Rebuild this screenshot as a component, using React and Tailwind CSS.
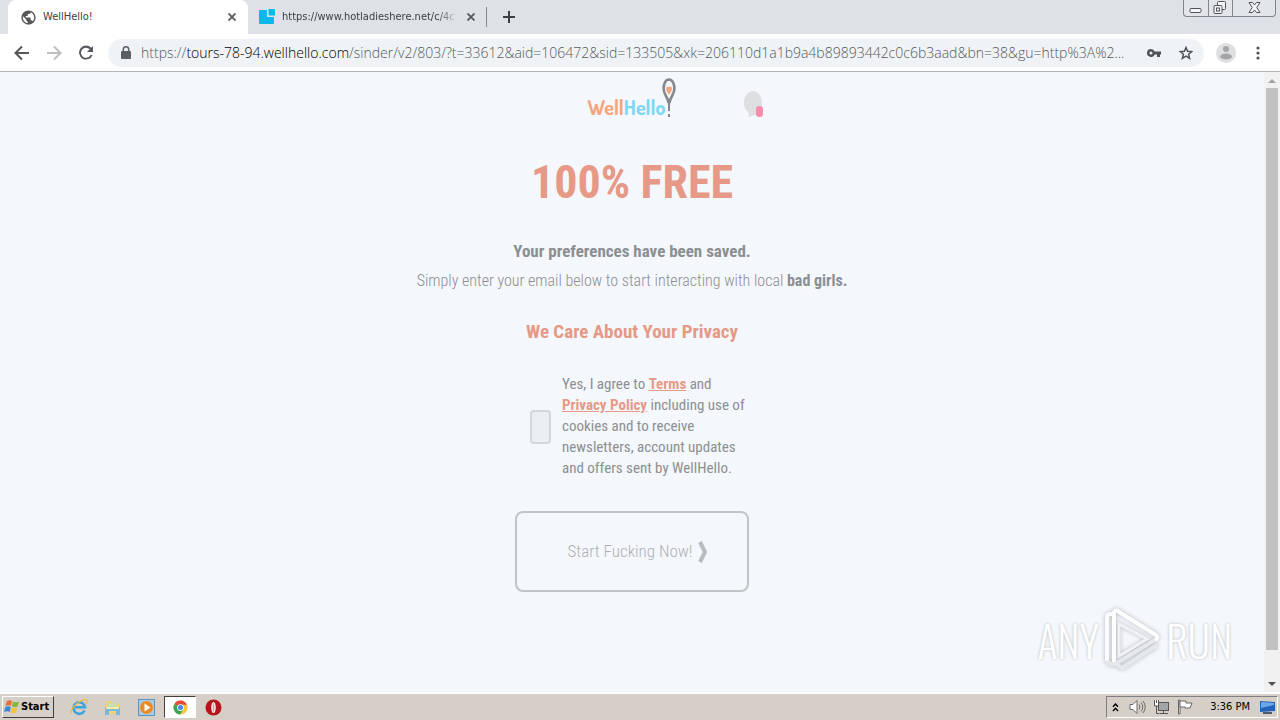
import React, { useState } from 'react';
import { MdPublic } from 'react-icons/md';

const Cross = () => (
    <svg width="8" height="8" viewBox="0 0 8 8" stroke="#55595e" strokeWidth="1.8" aria-hidden="true">
        <path d="M.5 .5l7 7M7.5 .5l-7 7" />
    </svg>
);

const TabStrip = () => (
    <div className="flex h-[34px] items-stretch bg-[#dee1e6] pl-2">
        <div className="flex w-60 items-center rounded-t-lg bg-white pr-3 pl-3">
            <MdPublic size={17} color="#54575c" aria-hidden="true" />
            <span className="ml-[6px] flex-1 text-[#3c4043]">WellHello!</span>
            <button aria-label="Close WellHello! tab"><Cross /></button>
        </div>
        <div className="flex w-[228px] items-center pl-[11px]">
            <svg width="16" height="16" viewBox="0 0 16 16" fill="#0cb7ef" aria-hidden="true">
                <path d="M1 1h7v7h7v6q0 1-1 1H1q-1 0-1-1V2q0-1 1-1z" />
                <path d="M9.5 0H15q1 0 1 1v5.5H11q-1.5 0-1.5-1.5z" />
            </svg>
            <span className="ml-[7px] w-[176px] overflow-hidden whitespace-nowrap text-[#3c4043] [mask-image:linear-gradient(to_right,black_88%,transparent)]">
                https://www.hotladieshere.net/c/4c
            </span>
            <button className="ml-[9px]" aria-label="Close hotladieshere.net tab"><Cross /></button>
        </div>
        <div className="ml-[10px] h-5 w-px self-center bg-[#85888c]" />
        <button className="ml-4 self-center" aria-label="New tab">
            <svg width="12" height="12" viewBox="0 0 12 12" stroke="#3c4043" strokeWidth="2">
                <path d="M6 0v12M0 6h12" />
            </svg>
        </button>
        <div className="mr-1 ml-auto flex h-[17px] w-[93px] rounded-b border border-t-0 border-[#82868c] bg-[#e2e5ea]">
            <button className="flex flex-1 items-center justify-center border-r border-[#82868c]" aria-label="Minimize">
                <svg width="13" height="17" viewBox="0 0 13 17" fill="#f4f5f7" stroke="#50545a">
                    <rect x="1" y="8.5" width="11" height="4" rx="1" />
                </svg>
            </button>
            <button className="flex flex-1 items-center justify-center border-r border-[#82868c]" aria-label="Restore">
                <svg width="14" height="14" viewBox="0 0 14 14" fill="#f4f5f7" stroke="#50545a">
                    <rect x="4.5" y=".5" width="8" height="8" rx="1" />
                    <rect x="1" y="4.5" width="8" height="8" rx="1" />
                    <rect x="3.5" y="7" width="3" height="3" />
                </svg>
            </button>
            <button className="flex w-[42px] items-center justify-center" aria-label="Close window">
                <svg width="13" height="12" viewBox="0 0 13 12" fill="#f4f5f7" stroke="#50545a">
                    <path d="M1 .5h3.5l2 2.5 2-2.5H12L8.8 5.5l3.2 5H8.5l-2-2.5-2 2.5H1l3.2-5z" />
                </svg>
            </button>
        </div>
    </div>
);

const Toolbar = () => (
    <div className="flex h-[38px] items-center border-b border-[#b1b4b8] bg-white pr-5 pl-[14px]">
        <button aria-label="Back">
            <svg width="16" height="16" viewBox="0 0 16 16" fill="none" stroke="#55585d" strokeWidth="2">
                <path d="M15 8H2M8 1.500L1.500 8 8 14.500" />
            </svg>
        </button>
        <button className="ml-4" aria-label="Forward">
            <svg width="16" height="16" viewBox="0 0 16 16" fill="none" stroke="#bcbec1" strokeWidth="2">
                <path d="M1 8h13M8 1.500l6.500 6.500L8 14.500" />
            </svg>
        </button>
        <button className="ml-4" aria-label="Reload">
            <svg width="16" height="16" viewBox="0 0 16 16" fill="#55585d">
                <path d="M13.200 2.800A7 7 0 1 0 14.600 10h-2.100A5 5 0 1 1 11.700 4.300L9 7h6V1z" />
            </svg>
        </button>
        <div className="ml-[14px] flex h-7 min-w-0 flex-1 items-center rounded-full bg-[#f0f3f5] pr-[11px] pl-[13px]">
            <svg width="10" height="13" viewBox="0 0 10 13" className="shrink-0" aria-hidden="true">
                <rect x="0" y="5" width="10" height="8" rx="1" fill="#5b5f64" />
                <path d="M2.300 5V3.500a2.700 2.700 0 0 1 5.400 0V5" fill="none" stroke="#5b5f64" strokeWidth="1.500" />
            </svg>
            <div className="ml-[10px] min-w-0 flex-1 font-['Open_Sans',sans-serif] text-[14px] font-light whitespace-nowrap text-[#55595e]">
                https://<span className="text-black">tours-78-94.wellhello.com</span>/sinder/v2/803/?t=33612&amp;aid=106472&amp;sid=133505&amp;xk=206110d1a1b9a4b89893442c0c6b3aad&amp;bn=38&amp;gu=http%3A%2...
            </div>
            <button aria-label="Saved passwords">
                <svg width="14" height="8" viewBox="0 0 14 8" fill="#505459">
                    <path fillRule="evenodd" d="M4 0a4 4 0 1 0 3.700 5.500H10V8h3V5.500h1v-3H7.700A4 4 0 0 0 4 0zm0 2.500a1.500 1.500 0 1 1 0 3 1.500 1.500 0 0 1 0-3z" />
                </svg>
            </button>
            <button className="ml-[18px]" aria-label="Bookmark this page">
                <svg width="14" height="14" viewBox="0 0 14 14" fill="none" stroke="#505459" strokeWidth="1.500">
                    <path d="M7 1.500l1.600 3.800 4.200.3-3.200 2.700 1 4.100L7 10.200l-3.600 2.200 1-4.100-3.200-2.700 4.200-.3z" />
                </svg>
            </button>
        </div>
        <button className="ml-3" aria-label="Profile">
            <svg width="20" height="20" viewBox="0 0 20 20">
                <circle cx="10" cy="10" r="10" fill="#dedfe1" />
                <circle cx="10" cy="6" r="3" fill="#a3a5a8" />
                <ellipse cx="10" cy="13.500" rx="6" ry="3" fill="#a3a5a8" />
            </svg>
        </button>
        <button className="ml-5" aria-label="Menu">
            <svg width="4" height="14" viewBox="0 0 4 14" fill="#505459">
                <circle cx="2" cy="2" r="1.600" />
                <circle cx="2" cy="7" r="1.600" />
                <circle cx="2" cy="12" r="1.600" />
            </svg>
        </button>
    </div>
);

const Logo = () => (
    <a href="#home" className="flex h-10 items-end font-['Dosis','Roboto_Condensed',sans-serif] text-[20px] leading-[22px] font-bold">
        <span className="text-[#f6a57c]">Well</span>
        <span className="text-[#7dd7f3]">Hello</span>
        <svg width="14" height="40" viewBox="0 0 14 40" className="-ml-[3px]" aria-hidden="true">
            <path d="M7 1.500c-3.200 0-5.400 4-5.400 9 0 6 3.700 7.500 4.700 13.500h1.400c1-6 4.700-7.500 4.700-13.500 0-5-2.200-9-5.400-9z" fill="#f4f7fb" stroke="#85898f" strokeWidth="2.600" />
            <path d="M7 17C5.500 14.500 4 13 4 10.600c0-2.400 2.100-2.900 3-1.100 .9-1.800 3-1.300 3 1.100C10 13 8.500 14.500 7 17z" fill="#f5a77c" />
            <path d="M6 21h2v12H6zM6 36h2v3H6z" fill="#85898f" />
        </svg>
    </a>
);

const Watermark = () => (
    <div className="absolute right-8 bottom-5 flex items-center gap-[6px] font-['Oswald','Roboto_Condensed',sans-serif] text-[42px] leading-none font-light text-white [text-shadow:0_0_3px_#b4b8bc]">
        <span>ANY</span>
        <svg width="55" height="64" viewBox="0 0 55 64" fill="none" className="drop-shadow-[0_0_2px_#b4b8bc]" aria-hidden="true">
            <path d="M2 53V9q0-3 5-3" stroke="#fafcfd" strokeWidth="4" />
            <path d="M9 55V4q2-3 5 0l37 23q3 3-1 5" stroke="#fdfefe" strokeWidth="4" strokeLinejoin="round" />
            <path d="M50 32L10 56q-5 1-8-3M52 37L17 60l-6-4" stroke="#e6e9eb" strokeWidth="4" strokeLinejoin="round" />
            <path d="M14 16l28 15-28 17z" stroke="#f0f2f4" strokeWidth="3" />
        </svg>
        <span>RUN</span>
    </div>
);

const Page = () => {
    const [agreed, setAgreed] = useState(false);

    return (
        <main className="relative min-w-0 flex-1 bg-[#f4f7fb] font-['Roboto_Condensed','Liberation_Sans',sans-serif] text-[#8c8f92]">
            <div className="grid grid-cols-[1fr_auto_1fr] items-center pt-[6px]">
                <span />
                <Logo />
                <svg width="19" height="27" viewBox="0 0 19 27" className="mt-3 ml-[68px]" aria-hidden="true">
                    <path d="M9 0c5 0 9 5 9 12s-4 12-8 12c-2 0-3 2-6 2 1-2 1-3 0-5-3-2-4-5-4-9C0 5 4 0 9 0z" fill="#dddfe1" />
                    <rect x="12" y="15" width="7" height="11" rx="3" fill="#fb8cab" />
                </svg>
            </div>
            <h1 className="mt-[34px] text-center text-[46px] leading-[60px] font-bold text-[#e69987]">100% FREE</h1>
            <p className="mt-6 text-center text-[17px] leading-[30px] font-bold">Your preferences have been saved.</p>
            <p className="text-center text-base leading-[30px] font-light">
                Simply enter your email below to start interacting with local <strong className="font-bold">bad girls.</strong>
            </p>
            <h2 className="mt-5 text-center text-[19px] leading-8 font-bold text-[#e69987]">We Care About Your Privacy</h2>
            <div className="mx-auto mt-[26px] flex w-[234px] items-center pl-[15px]">
                <input
                    id="agree"
                    type="checkbox"
                    checked={agreed}
                    onChange={(e) => setAgreed(e.target.checked)}
                    className="h-[34px] w-[21px] shrink-0 appearance-none rounded-sm border-2 border-[#d4d7d9] bg-[#eceff1] checked:bg-[#e69987]"
                />
                <label htmlFor="agree" className="ml-[11px] text-[15px] leading-[21px] whitespace-nowrap">
                    Yes, I agree to <a href="#terms" className="font-bold text-[#e69987] underline">Terms</a> and
                    <br />
                    <a href="#privacy" className="font-bold text-[#e69987] underline">Privacy Policy</a> including use of
                    <br />
                    cookies and to receive
                    <br />
                    newsletters, account updates
                    <br />
                    and offers sent by WellHello.
                </label>
            </div>
            <button className="mx-auto mt-8 flex h-[81px] w-[234px] items-center justify-center gap-[6px] rounded-lg border-2 border-[#c0c4c7] pl-3 text-[17px] font-light text-[#aeb1b4]">
                Start Fucking Now!
                <svg width="10" height="24" viewBox="0 0 10 24" fill="none" stroke="#b9bcbf" strokeWidth="4" aria-hidden="true">
                    <path d="M2 2l5 10-5 10" />
                </svg>
            </button>
            <Watermark />
        </main>
    );
};

const Scrollbar = () => (
    <div className="flex w-4 flex-col items-center bg-[#f1f1f1]" aria-hidden="true">
        <svg width="16" height="16" viewBox="0 0 16 16" fill="#a3a3a3"><path d="M4 11l4-4 4 4z" /></svg>
        <div className="w-3 flex-[562] bg-[#c1c1c1]" />
        <div className="flex-[26]" />
        <svg width="16" height="16" viewBox="0 0 16 16" fill="#505050"><path d="M4 6l4 4 4-4z" /></svg>
    </div>
);

const Taskbar = () => (
    <footer className="flex h-7 items-center border-t-2 border-white bg-[#d5cfc7] pl-[2px] text-black">
        <button className="flex h-[22px] w-[52px] items-center gap-px border border-t-white border-r-[#404040] border-b-[#404040] border-l-white pl-px text-[11px] font-bold">
            <svg width="16" height="16" viewBox="0 0 16 16" className="shrink-0" aria-hidden="true">
                <path d="M3 2q3-1.500 5 0L7 7q-3-1.500-5.500 0z" fill="#ec6a35" />
                <path d="M9 2.500q3 1.500 6 0L13.500 7.500q-3 1.500-5.500 0z" fill="#83b83c" />
                <path d="M1.300 8q3-1.500 5.500 0l-1 5Q3 11.500 0 13z" fill="#3f87d3" />
                <path d="M7.800 8.500q3 1.500 5.500 0l-1.300 5q-3 1.500-5.200 0z" fill="#f6c43a" />
            </svg>
            Start
        </button>
        <button className="ml-4" aria-label="Internet Explorer">
            <svg width="18" height="18" viewBox="0 0 18 18" fill="none">
                <path d="M14.500 12.500A5.800 5.800 0 1 1 15 9.300H5" stroke="#41a3dd" strokeWidth="2.600" />
                <path d="M1.500 15.500C-1 11 12 0 16.500 2c1 .8 .5 2.500-.5 4" stroke="#e8bd3e" strokeWidth="1.300" />
            </svg>
        </button>
        <button className="ml-4" aria-label="Explorer">
            <svg width="17" height="17" viewBox="0 0 17 17">
                <path d="M2 2h5l1 2h7v11H2z" fill="#edd27a" />
                <path d="M4 4h9v6H4z" fill="#c9dfb0" />
                <path d="M1 8h15v8h-4v-4H5v4H1z" fill="#79b9df" />
                <path d="M2 8h13v2H2z" fill="#f7e9a9" />
            </svg>
        </button>
        <button className="ml-[17px]" aria-label="Media Player">
            <svg width="17" height="17" viewBox="0 0 17 17">
                <rect x=".5" y=".5" width="16" height="16" fill="#a8cdea" stroke="#5b93c3" />
                <circle cx="8.500" cy="8.500" r="6.500" fill="#ef8b1e" />
                <path d="M6.500 4.500l6 4-6 4z" fill="#fff" />
            </svg>
        </button>
        <button className="ml-[9px] flex h-[22px] w-8 items-center justify-center border border-t-[#404040] border-r-white border-b-white border-l-[#404040] bg-white" aria-label="Chrome">
            <svg width="15" height="15" viewBox="0 0 16 16">
                <circle cx="8" cy="8" r="7.500" fill="#fbc62f" />
                <path d="M8 8L1.500 4.200A7.500 7.500 0 0 1 14.800 5H8z" fill="#e04a3a" />
                <path d="M1.500 4.200A7.500 7.500 0 0 0 7.600 15.500L11 9.500 8 8z" fill="#3ba558" />
                <circle cx="8" cy="8" r="3.600" fill="#fff" />
                <circle cx="8" cy="8" r="2.700" fill="#4a88e8" />
            </svg>
        </button>
        <button className="ml-[9px]" aria-label="Opera">
            <svg width="17" height="17" viewBox="0 0 17 17">
                <circle cx="8.500" cy="8.500" r="8" fill="#b3171d" />
                <ellipse cx="8.500" cy="8.500" rx="2.200" ry="5.500" fill="#fff" />
                <ellipse cx="8.500" cy="8.500" rx="1" ry="4.500" fill="#d8a5a5" />
            </svg>
        </button>
        <div className="mr-[2px] ml-auto flex h-[22px] items-center border border-t-[#808080] border-r-white border-b-white border-l-[#808080] pr-px pl-[5px]">
            <svg width="7" height="9" viewBox="0 0 7 9" fill="none" stroke="#000" strokeWidth="1.400" aria-hidden="true">
                <path d="M1 3.800L3.500 1 6 3.800M1 8l2.500-2.800L6 8" />
            </svg>
            <svg width="17" height="16" viewBox="0 0 17 16" fill="none" stroke="#6b6b6b" className="ml-[10px]" aria-hidden="true">
                <path d="M1 5.500h3l4-4v13l-4-4H1z" fill="#fff" />
                <path d="M10 5.500q2 2.500 0 5M12 3.500q3.500 4.500 0 9M14 2q4.500 6 0 12" />
            </svg>
            <svg width="17" height="16" viewBox="0 0 17 16" fill="none" stroke="#555" className="ml-[7px]" aria-hidden="true">
                <rect x="5.500" y="3.500" width="10" height="8" fill="#a3a6a9" />
                <path d="M7 14.500h8M10.500 12v2" />
                <path d="M3.500 7v7.500h3" />
                <path d="M1.500 1v6h4V1M3.500 1v3" fill="#fff" />
            </svg>
            <svg width="17" height="16" viewBox="0 0 17 16" fill="#fff" stroke="#666" className="ml-[7px]" aria-hidden="true">
                <path d="M1.500 1v14h1.500V1z" />
                <path d="M3 2h6v2h6l-2 5H8V8H3z" />
            </svg>
            <span className="ml-4 text-[11px]">3:36 PM</span>
            <svg width="16" height="14" viewBox="0 0 16 14" className="ml-[10px]" aria-hidden="true">
                <path d="M0 1l15 1v9L0 12z" fill="#2464b8" />
                <path d="M1 2l13 1v2L1 8z" fill="#6ba6e6" />
                <path d="M3 12h9v2H3z" fill="#4a5a70" />
            </svg>
        </div>
    </footer>
);

const App = () => (
    <div className="flex min-h-screen flex-col font-['DejaVu_Sans_Condensed','DejaVu_Sans',sans-serif] text-[11px]">
        <TabStrip />
        <Toolbar />
        <div className="flex flex-1">
            <Page />
            <Scrollbar />
        </div>
        <Taskbar />
    </div>
);

export default App;
